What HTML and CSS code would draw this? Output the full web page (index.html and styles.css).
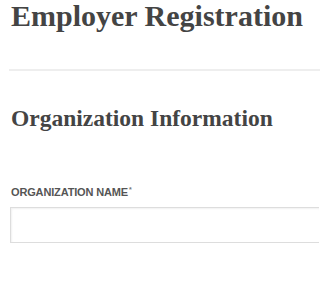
FILE: index.html
```html
<!DOCTYPE html>
<html>
<head>
<meta charset="utf-8">
<link rel="stylesheet" href="styles.css">
</head>
<body>
<div class="page">
  <h1 class="title">Employer Registration</h1>
  <hr class="divider">
  <h2 class="section">Organization Information</h2>
  <div class="field">
    <label class="label" for="org">ORGANIZATION NAME<sup class="req">*</sup></label>
    <input class="input" id="org" type="text">
  </div>
</div>
</body>
</html>
```
FILE: styles.css
```css
html, body {
  margin: 0;
  padding: 0;
  background: #fff;
}
body {
  overflow: hidden;
}
.page {
  padding: 0 0 0 11px;
  overflow: hidden;
}
.title {
  font-family: "Liberation Serif", serif;
  font-weight: bold;
  font-size: 30px;
  line-height: 32px;
  color: #444;
  margin: 0;
  white-space: nowrap;
}
.divider {
  border: 0;
  border-top: 2px solid #eee;
  margin: 37px 0 0 -2px;
}
.section {
  font-family: "Liberation Serif", serif;
  font-weight: bold;
  font-size: 23.5px;
  line-height: 27px;
  color: #444;
  margin: 34px 0 0 0;
  white-space: nowrap;
}
.field {
  margin-top: 54px;
}
.label {
  display: block;
  font-family: "Liberation Sans", Arial, sans-serif;
  font-weight: bold;
  font-size: 11px;
  line-height: 13px;
  color: #555;
  letter-spacing: -0.15px;
}
.req {
  font-size: 7px;
  vertical-align: top;
  line-height: 7px;
  color: #777;
  margin-left: 1px;
}
.input {
  display: block;
  box-sizing: border-box;
  width: 100%;
  height: 36px;
  margin: 8px 0 0 -1px;
  border: 1px solid #ddd;
  border-right: 0;
  box-shadow: inset 1px 1px 2px rgba(0,0,0,0.06);
  background: #fff;
}
```
